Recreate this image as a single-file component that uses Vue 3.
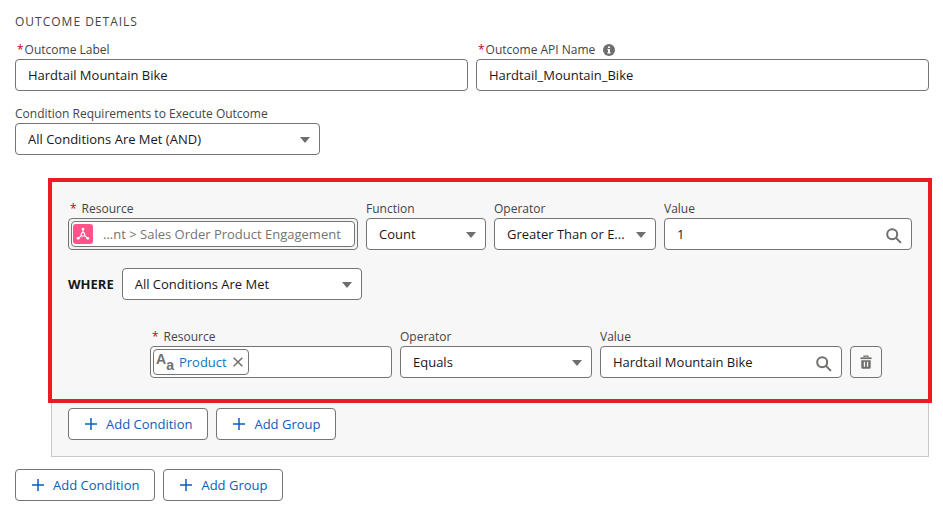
<script setup>
import { ref } from 'vue'

const outcomeLabel = ref('Hardtail Mountain Bike')
const apiName = ref('Hardtail_Mountain_Bike')
const requirement = ref('All Conditions Are Met (AND)')
const resource = ref('...nt > Sales Order Product Engagement')
const fn = ref('Count')
const operator = ref('Greater Than or E...')
const value = ref('1')
const where = ref('All Conditions Are Met')
const subOperator = ref('Equals')
const subValue = ref('Hardtail Mountain Bike')
const subResource = ref('')
const actions = ['Add Condition', 'Add Group']
</script>

<template>
  <main class="page">
    <h2 class="title">OUTCOME DETAILS</h2>

    <div class="row names">
      <div class="field">
        <label for="outcome-label"><abbr class="req tight">*</abbr>Outcome Label</label>
        <input id="outcome-label" v-model="outcomeLabel" class="control" type="text" />
      </div>
      <div class="field">
        <label for="api-name">
          <abbr class="req tight">*</abbr>Outcome API Name
          <svg class="info" viewBox="0 0 12 12">
            <circle cx="6" cy="6" r="6" fill="#706e6b" />
            <path d="M5 2.4h2v1.6H5zM4.4 5H7v3.4h.7v1H4.3v-1H5V6h-.6z" fill="#fff" />
          </svg>
        </label>
        <input id="api-name" v-model="apiName" class="control" type="text" />
      </div>
    </div>

    <div class="field requirement">
      <label for="requirement">Condition Requirements to Execute Outcome</label>
      <div class="select">
        <select id="requirement" v-model="requirement" class="control">
          <option>All Conditions Are Met (AND)</option>
        </select>
        <svg class="arrow" viewBox="0 0 10 6"><path d="M0 0h10L5 6z" /></svg>
      </div>
    </div>

    <section class="group">
      <div class="conditions">
        <div class="row main-row">
          <div class="field">
            <label for="resource"><abbr class="req">*</abbr>Resource</label>
            <div class="control pill-box muted">
              <div class="pill wide">
                <svg class="entity" viewBox="0 0 20 20">
                  <rect width="20" height="20" rx="3" fill="#ff538a" />
                  <g fill="none" stroke="#fff" stroke-width="1.2">
                    <circle cx="10" cy="10.4" r="1.8" />
                    <path d="M10 5v3.6M8.4 11.6L5.4 14.2M11.6 11.6l3 2.6" />
                  </g>
                  <g fill="#fff">
                    <circle cx="10" cy="5" r="1.3" />
                    <circle cx="5.2" cy="14.3" r="1.4" />
                    <circle cx="14.8" cy="14.3" r="1.4" />
                  </g>
                </svg>
                <input id="resource" v-model="resource" class="bare" type="text" />
              </div>
            </div>
          </div>
          <div class="field">
            <label for="function">Function</label>
            <div class="select">
              <select id="function" v-model="fn" class="control"><option>Count</option></select>
              <svg class="arrow" viewBox="0 0 10 6"><path d="M0 0h10L5 6z" /></svg>
            </div>
          </div>
          <div class="field">
            <label for="operator">Operator</label>
            <div class="select">
              <select id="operator" v-model="operator" class="control"><option>Greater Than or E...</option></select>
              <svg class="arrow" viewBox="0 0 10 6"><path d="M0 0h10L5 6z" /></svg>
            </div>
          </div>
          <div class="field">
            <label for="value">Value</label>
            <div class="select">
              <input id="value" v-model="value" class="control" type="text" />
              <svg class="search" viewBox="0 0 16 16"><circle cx="6.2" cy="6.2" r="5" /><path d="M9.9 9.9l5 5" /></svg>
            </div>
          </div>
        </div>

        <div class="where">
          <label for="where">WHERE</label>
          <div class="select">
            <select id="where" v-model="where" class="control"><option>All Conditions Are Met</option></select>
            <svg class="arrow" viewBox="0 0 10 6"><path d="M0 0h10L5 6z" /></svg>
          </div>
        </div>

        <div class="row sub-row">
          <div class="field">
            <label for="sub-resource"><abbr class="req">*</abbr>Resource</label>
            <div class="control pill-box">
              <div class="pill">
                <span class="type"><b>A</b><b class="low">a</b></span>
                <a href="#product">Product</a>
                <button class="remove" type="button" aria-label="Remove">
                  <svg viewBox="0 0 10 10"><path d="M.7.7l8.6 8.6M9.3.7L.7 9.3" /></svg>
                </button>
              </div>
              <input id="sub-resource" v-model="subResource" class="bare" type="text" />
            </div>
          </div>
          <div class="field">
            <label for="sub-operator">Operator</label>
            <div class="select">
              <select id="sub-operator" v-model="subOperator" class="control"><option>Equals</option></select>
              <svg class="arrow" viewBox="0 0 10 6"><path d="M0 0h10L5 6z" /></svg>
            </div>
          </div>
          <div class="field">
            <label for="sub-value">Value</label>
            <div class="select">
              <input id="sub-value" v-model="subValue" class="control" type="text" />
              <svg class="search" viewBox="0 0 16 16"><circle cx="6.2" cy="6.2" r="5" /><path d="M9.9 9.9l5 5" /></svg>
            </div>
          </div>
          <button class="delete" type="button" aria-label="Delete">
            <svg viewBox="0 0 12 14">
              <path d="M4 2.6V1.2h4v1.4" fill="none" stroke="#706e6b" stroke-width="1.2" />
              <path d="M.4 2.4h11.2v1.7H.4z" fill="#706e6b" />
              <path fill-rule="evenodd" d="M1.3 5.2h9.4v7.2q0 1.3-1.3 1.3H2.6q-1.3 0-1.3-1.3zM3.8 6.8v4.9h1.3V6.8zM6.9 6.8v4.9h1.3V6.8z" fill="#706e6b" />
            </svg>
          </button>
        </div>
      </div>

      <div class="row actions">
        <button v-for="a in actions" :key="a" class="action" type="button">
          <svg viewBox="0 0 12 12"><path d="M6 0v12M0 6h12" /></svg>{{ a }}
        </button>
      </div>
    </section>

    <div class="row outer-actions">
      <button v-for="a in actions" :key="a" class="action" type="button">
        <svg viewBox="0 0 12 12"><path d="M6 0v12M0 6h12" /></svg>{{ a }}
      </button>
    </div>
  </main>
</template>

<style>
body {
  margin: 0;
  background: #fff;
}
</style>

<style scoped>
* {
  box-sizing: border-box;
}
.page {
  padding: 13px 14px 12px 15px;
  font-family: 'Open Sans', 'Noto Sans', sans-serif;
  font-size: 13px;
  line-height: 18px;
  color: #181818;
}
.title {
  margin: 0 0 10px;
  font-size: 12px;
  font-weight: 400;
  line-height: 18px;
  letter-spacing: 1px;
  color: #444;
}
input,
select,
button {
  font: inherit;
  color: inherit;
}
svg {
  display: block;
  flex: none;
}
.row {
  display: flex;
  gap: 8px;
}
.names {
  margin-bottom: 14px;
}
.names .field {
  flex: 1;
}
.field {
  min-width: 0;
}
.field label {
  display: flex;
  align-items: center;
  height: 18px;
  font-size: 12px;
  color: #444;
  white-space: nowrap;
}
.req {
  padding: 0 5px 0 2px;
  color: #ba0517;
  text-decoration: none;
}
.req.tight {
  padding-right: 1px;
}
.info {
  width: 12px;
  height: 12px;
  margin-left: 8px;
}
.control {
  display: block;
  width: 100%;
  height: 32px;
  margin: 0;
  padding: 0 12px;
  border: 1px solid #747474;
  border-radius: 4px;
  background: #fff;
  appearance: none;
  outline: none;
}
.select {
  position: relative;
}
.arrow {
  position: absolute;
  right: 10px;
  top: 14px;
  width: 10px;
  height: 6px;
  fill: #706e6b;
}
.search {
  position: absolute;
  right: 10px;
  top: 10px;
  width: 16px;
  height: 16px;
  fill: none;
  stroke: #706e6b;
  stroke-width: 2;
}
.requirement {
  width: 33.4%;
  margin-bottom: 26px;
}
.group {
  margin-left: 36px;
  padding: 18px 16px 16px;
  border: 1px solid #c9c9c9;
  background: #f7f7f7;
}
.conditions {
  position: relative;
}
.conditions::after {
  content: '';
  position: absolute;
  inset: -22px -20px -25px;
  border: 4px solid #e91c24;
  pointer-events: none;
}
.main-row {
  display: grid;
  grid-template-columns: 290fr 120fr 162fr 248fr;
}
.pill-box {
  display: flex;
  align-items: center;
  padding: 0 2px;
}
.pill-box.muted {
  background: #f3f3f3;
}
.pill {
  display: flex;
  flex: none;
  align-items: center;
  height: 26px;
  padding: 0 5px 0 2px;
  border: 1px solid #747474;
  border-radius: 4px;
  background: #fff;
}
.pill.wide {
  flex: 1;
  min-width: 0;
  padding-left: 1px;
  color: #747474;
}
.pill a {
  margin: 0 6px 0 5px;
  color: #0b76c2;
  text-decoration: none;
}
.entity {
  width: 20px;
  height: 20px;
  margin-right: 10px;
}
.bare {
  flex: 1;
  width: 0;
  min-width: 0;
  height: 24px;
  padding: 0;
  border: 0;
  background: transparent;
  outline: none;
}
.type {
  display: flex;
  align-items: center;
  height: 24px;
  font-family: 'Liberation Sans', sans-serif;
  font-size: 14px;
  line-height: 16px;
  color: #706e6b;
}
.type b {
  padding-bottom: 6px;
}
.type .low {
  padding: 6px 0 0;
}
.remove {
  padding: 0;
  border: 0;
  background: none;
}
.remove svg {
  width: 10px;
  height: 10px;
  stroke: #706e6b;
  stroke-width: 1.5;
}
.where {
  display: flex;
  align-items: center;
  gap: 8px;
  margin: 18px 0 28px;
}
.where label {
  font-weight: 700;
}
.where .select {
  width: 240px;
}
.sub-row {
  display: grid;
  grid-template-columns: 242fr 192fr 242fr 32px;
  align-items: end;
  padding: 0 30px 0 82px;
}
.delete {
  display: grid;
  place-items: center;
  width: 32px;
  height: 32px;
  padding: 0;
  border: 1px solid #747474;
  border-radius: 4px;
  background: #f9f9f9;
}
.delete svg {
  width: 12px;
  height: 14px;
}
.actions {
  margin-top: 30px;
}
.outer-actions {
  margin-top: 12px;
}
.action {
  display: flex;
  align-items: center;
  gap: 9px;
  height: 32px;
  padding: 0 15px 0 16px;
  border: 1px solid #747474;
  border-radius: 4px;
  background: #fff;
  color: #0b5cbb;
}
.action svg {
  width: 12px;
  height: 12px;
  stroke: #0b5cc0;
  stroke-width: 1.5;
}
</style>
